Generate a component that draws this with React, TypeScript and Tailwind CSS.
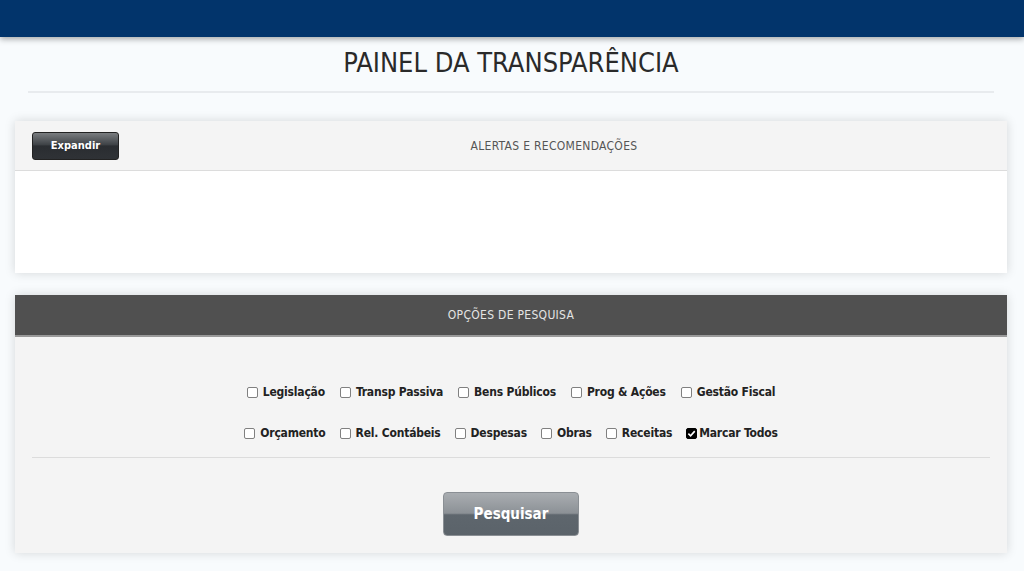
import { useState } from "react";

const OPTIONS_ROW1 = ["Legislação", "Transp Passiva", "Bens Públicos", "Prog & Ações", "Gestão Fiscal"];
const OPTIONS_ROW2 = ["Orçamento", "Rel. Contábeis", "Despesas", "Obras", "Receitas"];

const NARROW = "font-['Liberation_Sans_Narrow','DejaVu_Sans_Condensed',sans-serif]";

function Check({ label, checked, onToggle, tight }: { label: string; checked: boolean; onToggle: () => void; tight?: boolean }) {
  return (
    <label className={`flex cursor-pointer items-center ${tight ? "gap-[2px]" : "gap-[5px]"}`} onClick={onToggle}>
      <span
        className={`flex h-[11px] w-[11px] items-center justify-center rounded-[2px] border ${
          checked ? "border-black bg-black" : "border-[#808080] bg-white"
        }`}
      >
        {checked && (
          <svg viewBox="0 0 10 10" className="h-[9px] w-[9px]">
            <path d="M1.5 5.2 L4 7.6 L8.6 2.4" fill="none" stroke="white" strokeWidth="1.8" />
          </svg>
        )}
      </span>
      <span>{label}</span>
    </label>
  );
}

export default function App() {
  const [checked, setChecked] = useState<Record<string, boolean>>({});
  const [all, setAll] = useState(true);
  const toggle = (k: string) => setChecked((c) => ({ ...c, [k]: !c[k] }));

  return (
    <div className={`min-h-[571px] bg-[#f8fbfd] ${NARROW}`}>
      <div className="h-[37px] bg-[#02346b] shadow-[0_2px_6px_rgba(0,0,0,0.35)]" />

      <div className="pr-[2px]">
        <div className="px-[28px]">
          <h1 className="pt-[8px] text-center text-[27px] leading-[36px] font-normal text-[#2a2a2a]">
            PAINEL DA TRANSPARÊNCIA
          </h1>
          <div className="mt-[10px] h-[2px] bg-[#e8ebee]" />
        </div>

        <div className="mx-[15px] mt-[28px] bg-white shadow-[0_0_10px_rgba(0,0,0,0.15)]">
          <div className="relative flex h-[50px] items-center justify-center border-b border-[#dcdcdc] bg-[#f4f4f4]">
            <button
              type="button"
              className="absolute left-[17px] top-[11px] h-[28px] w-[87px] rounded-[3px] border border-[#222] bg-[linear-gradient(#7a7d80_0%,#3e4246_45%,#2a2d31_50%,#2f3236_100%)] text-[11px] font-bold text-white"
            >
              Expandir
            </button>
            <span className="ml-[86px] text-[12px] tracking-[0.3px] text-[#555]">ALERTAS E RECOMENDAÇÕES</span>
          </div>
          <div className="h-[102px]" />
        </div>

        <div className="mx-[15px] mt-[22px] bg-[#f4f4f4] shadow-[0_0_10px_rgba(0,0,0,0.15)]">
          <div className="flex h-[42px] items-center justify-center border-b-2 border-[#999] bg-[#505050] text-[12px] tracking-[0.3px] text-[#e4e4e4]">
            OPÇÕES DE PESQUISA
          </div>
          <div className="px-[17px]">
            <div className="flex flex-col items-center gap-[23px] pt-[46px] text-[12px] font-bold tracking-[-0.2px] text-[#222]">
              <div className="flex gap-[15px]">
                {OPTIONS_ROW1.map((o) => (
                  <Check key={o} label={o} checked={!!checked[o]} onToggle={() => toggle(o)} />
                ))}
              </div>
              <div className="flex gap-[14px]">
                {OPTIONS_ROW2.map((o) => (
                  <Check key={o} label={o} checked={!!checked[o]} onToggle={() => toggle(o)} />
                ))}
                <Check label="Marcar Todos" checked={all} onToggle={() => setAll(!all)} tight />
              </div>
            </div>
            <div className="mt-[15px] h-px bg-[#dcdcdc]" />
            <div className="flex justify-center pt-[34px] pb-[17px]">
              <button
                type="button"
                className="h-[44px] w-[136px] rounded-[4px] border border-[#8a8f94] bg-[linear-gradient(#a9adb1_0%,#8c9196_48%,#5e666d_52%,#5b636a_100%)] text-[15px] font-bold text-white"
              >
                Pesquisar
              </button>
            </div>
          </div>
        </div>
      </div>
    </div>
  );
}
